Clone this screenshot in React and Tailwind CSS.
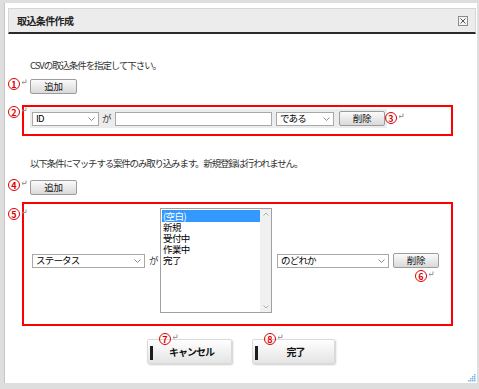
import React from "react";

function Ret({ className = "" }) {
  return (
    <svg width="6" height="6" viewBox="0 0 6 6" className={className}>
      <path d="M5 0.5 V3.5 H1.2" stroke="#8a8a8a" strokeWidth="0.9" fill="none" />
      <path d="M2.4 2.2 L1 3.5 L2.4 4.8" stroke="#8a8a8a" strokeWidth="0.9" fill="none" />
    </svg>
  );
}

function Circ({ n }) {
  return (
    <span className="inline-flex w-[12px] h-[12px] rounded-full border border-[#e00000] text-[#e00000] text-[9px] font-bold leading-none items-center justify-center">
      {n}
    </span>
  );
}

function Mark({ n, className = "" }) {
  return (
    <div className={`flex items-start ${className}`}>
      <Circ n={n} />
      <Ret className="mt-[1px] ml-[1px]" />
    </div>
  );
}

function Sel({ className = "", label }) {
  return (
    <div
      className={`h-[14px] border border-[#a8a8a8] bg-white flex items-center justify-between pl-[3px] pr-[3px] ${className}`}
    >
      <span className="text-[9.5px] tracking-[-0.8px] leading-none text-black">{label}</span>
      <svg width="7" height="4" viewBox="0 0 7 4">
        <path d="M0.5 0.5 L3.5 3.5 L6.5 0.5" stroke="#808080" fill="none" strokeWidth="0.9" />
      </svg>
    </div>
  );
}

function Btn({ className = "", children }) {
  return (
    <div
      className={`h-[15px] border border-[#9c9c9c] rounded-[2px] bg-linear-to-b from-[#fbfbfb] to-[#d9d9d9] flex items-center justify-center text-[9.5px] tracking-[-0.3px] leading-none text-[#111] ${className}`}
    >
      {children}
    </div>
  );
}

function BigBtn({ className = "", n, children }) {
  return (
    <div
      className={`relative h-[25px] border border-[#dadada] rounded-[2px] bg-linear-to-b from-white to-[#e4e4e4] shadow-[1px_1px_2px_rgba(0,0,0,0.2)] flex items-center justify-center text-[10px] tracking-[-1px] font-bold text-[#111] ${className}`}
    >
      <div className="absolute left-[2px] top-[6px] w-[3px] h-[14px] bg-[#1e1e1e]" />
      <span className="pl-[4px]">{children}</span>
      <Mark n={n} className="absolute left-[11px] top-[-7px] tracking-normal" />
    </div>
  );
}

export default function App() {
  const items = ["新規", "受付中", "作業中", "完了"];
  return (
    <div className="w-[479px] h-[389px] bg-[#dedede] pt-[3px] pl-[4px] pr-[2px] pb-[6px] font-['Noto_Sans_CJK_JP','Noto_Sans',sans-serif]">
      <div className="relative h-full bg-white border-l border-[#c6c6c6] flex flex-col pt-[5px]">
        {/* header */}
        <div className="ml-[3px] mr-[1px] h-[26px] bg-[#ececec] border border-[#d6d6d6] border-b-2 border-b-[#2a2a2a] flex items-center justify-between pl-[8px] pr-[7px]">
          <span className="text-[10px] tracking-[-0.6px] font-bold text-[#222] leading-none">取込条件作成</span>
          <svg width="10" height="10" viewBox="0 0 10 10">
            <rect x="0.5" y="0.5" width="9" height="9" fill="#f4f4f4" stroke="#8a8a8a" />
            <path d="M2.5 2.5 L7.5 7.5 M7.5 2.5 L2.5 7.5" stroke="#555" strokeWidth="1" />
          </svg>
        </div>

        {/* text 1 */}
        <div className="mt-[24px] pl-[25px] text-[9.5px] tracking-[-1.1px] leading-[14px] text-[#333]">
          CSVの取込条件を指定して下さい。
        </div>

        {/* add row 1 */}
        <div className="mt-[7px] pl-[3px] flex items-start">
          <Mark n="1" className="w-[22px] mt-[-1px]" />
          <Btn className="w-[47px] h-[14px]">追加</Btn>
        </div>

        {/* red box 1 */}
        <div className="relative mt-[11px] ml-[17px] w-[431px] h-[31px] border-2 border-[#ff0000] pt-[2px] pl-[6px] flex items-start">
          <Mark n="2" className="absolute left-[-16px] top-[-1px]" />
          <div className="w-[357px] bg-[#ececec] flex items-center py-[2px] pl-[2px]">
            <Sel className="w-[67px]" label="ID" />
            <span className="mx-[3px] w-[10px] text-[9.5px] leading-none text-[#333]">が</span>
            <div className="w-[157px] h-[14px] border border-[#a8a8a8] bg-white" />
            <Sel className="ml-[4px] w-[58px]" label="である" />
            <Btn className="ml-[5px] w-[46px]">削除</Btn>
          </div>
          <Mark n="3" className="mt-[3px] ml-[-2px]" />
        </div>

        {/* text 2 */}
        <div className="mt-[20px] pl-[25px] text-[9.5px] tracking-[-1.2px] leading-[14px] text-[#333]">
          以下条件にマッチする案件のみ取り込みます。新規登録は行われません。
        </div>

        {/* add row 2 */}
        <div className="mt-[10px] pl-[3px] flex items-start">
          <Mark n="4" className="w-[22px] mt-[-1px]" />
          <Btn className="w-[47px] h-[14px]">追加</Btn>
        </div>

        {/* red box 2 */}
        <div className="relative mt-[7px] ml-[17px] w-[431px] h-[124px] border-2 border-[#ff0000] pt-[4px] pb-[11px] pl-[8px] flex items-center">
          <Mark n="5" className="absolute left-[-16px] top-[4px]" />
          <Sel className="w-[113px]" label="ステータス" />
          <span className="ml-[4px] w-[11px] text-[9.5px] leading-none text-[#333]">が</span>
          <div className="w-[112px] h-[105px] border border-[#a0a0a0] bg-white flex">
            <div className="flex-1 pt-[1px] pl-[1px] text-[9.5px] tracking-[-0.6px] text-black">
              <div className="bg-[#3399ff] text-white pl-[1px] h-[12px] leading-[12px]">(空白)</div>
              {items.map((t) => (
                <div key={t} className="pl-[1px] h-[11px] leading-[11px]">
                  {t}
                </div>
              ))}
            </div>
            <div className="w-[11px] bg-[#f0f0f0] flex flex-col justify-between items-center py-[3px]">
              <svg width="6" height="4" viewBox="0 0 6 4">
                <path d="M0.5 3.5 L3 1 L5.5 3.5" stroke="#b0b0b0" fill="none" />
              </svg>
              <svg width="6" height="4" viewBox="0 0 6 4">
                <path d="M0.5 0.5 L3 3 L5.5 0.5" stroke="#b0b0b0" fill="none" />
              </svg>
            </div>
          </div>
          <Sel className="ml-[5px] w-[112px]" label="のどれか" />
          <div className="relative ml-[4px]">
            <Btn className="w-[46px]">削除</Btn>
            <Mark n="6" className="absolute left-[22px] top-[17px]" />
          </div>
        </div>

        {/* bottom buttons */}
        <div className="mt-[13px] flex justify-center gap-[20px]">
          <BigBtn className="w-[85px]" n="7">キャンセル</BigBtn>
          <BigBtn className="w-[83px]" n="8">完了</BigBtn>
        </div>

        {/* resize grip */}
        <svg className="absolute right-[1px] bottom-[1px]" width="9" height="9" viewBox="0 0 9 9">
          {[
            [7, 1], [5, 3], [7, 3], [3, 5], [5, 5], [7, 5], [1, 7], [3, 7], [5, 7], [7, 7],
          ].map(([x, y], i) => (
            <rect key={i} x={x} y={y} width="1.5" height="1.5" fill="#7fb4e6" />
          ))}
        </svg>
      </div>
    </div>
  );
}
